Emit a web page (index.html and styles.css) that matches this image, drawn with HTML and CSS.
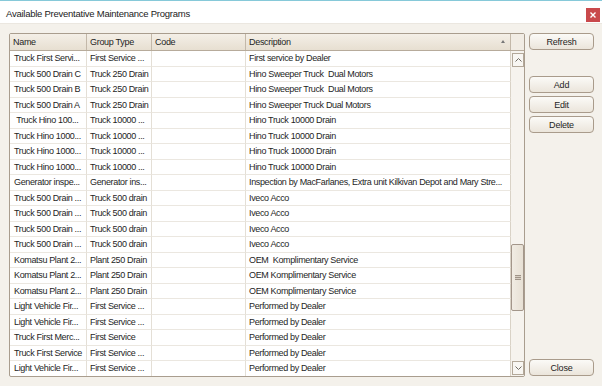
FILE: index.html
```html
<!DOCTYPE html>
<html lang="en">
<head>
    <meta charset="UTF-8">
    <title>Available Preventative Maintenance Programs</title>
    <link rel="stylesheet" href="styles.css">
</head>
<body>
<div class="window">
    <div class="titlebar">
        <span class="title">Available Preventative Maintenance Programs</span>
        <span class="close-x">
            <svg width="6" height="6" viewBox="0 0 6 6"><path d="M0.5 0.5L5.5 5.5M5.5 0.5L0.5 5.5" stroke="#fff" stroke-width="1.4"/></svg>
        </span>
    </div>
    <div class="content">
        <div class="grid">
            <div class="head">
                <div class="hcell">Name</div>
                <div class="hcell">Group Type</div>
                <div class="hcell">Code</div>
                <div class="hcell sorted">Description<span class="sort"></span></div>
                <div class="hcell corner"></div>
            </div>
            <div class="body">
                <div class="rows">
                    <div class="cell">Truck First Servi...</div><div class="cell">First Service ...</div><div class="cell"></div><div class="cell">First service by Dealer</div>
                    <div class="cell">Truck 500 Drain C</div><div class="cell">Truck 250 Drain</div><div class="cell"></div><div class="cell">Hino Sweeper Truck&nbsp; Dual Motors</div>
                    <div class="cell">Truck 500 Drain B</div><div class="cell">Truck 250 Drain</div><div class="cell"></div><div class="cell">Hino Sweeper Truck&nbsp; Dual Motors</div>
                    <div class="cell">Truck 500 Drain A</div><div class="cell">Truck 250 Drain</div><div class="cell"></div><div class="cell">Hino Sweeper Truck Dual Motors</div>
                    <div class="cell">&nbsp;Truck Hino 100...</div><div class="cell">Truck 10000 ...</div><div class="cell"></div><div class="cell">Hino Truck 10000 Drain</div>
                    <div class="cell">Truck Hino 1000...</div><div class="cell">Truck 10000 ...</div><div class="cell"></div><div class="cell">Hino Truck 10000 Drain</div>
                    <div class="cell">Truck Hino 1000...</div><div class="cell">Truck 10000 ...</div><div class="cell"></div><div class="cell">Hino Truck 10000 Drain</div>
                    <div class="cell">Truck Hino 1000...</div><div class="cell">Truck 10000 ...</div><div class="cell"></div><div class="cell">Hino Truck 10000 Drain</div>
                    <div class="cell">Generator inspe...</div><div class="cell">Generator ins...</div><div class="cell"></div><div class="cell">Inspection by MacFarlanes, Extra unit Kilkivan Depot and Mary Stre...</div>
                    <div class="cell">Truck 500 Drain ...</div><div class="cell">Truck 500 drain</div><div class="cell"></div><div class="cell">Iveco Acco</div>
                    <div class="cell">Truck 500 Drain ...</div><div class="cell">Truck 500 drain</div><div class="cell"></div><div class="cell">Iveco Acco</div>
                    <div class="cell">Truck 500 Drain ...</div><div class="cell">Truck 500 drain</div><div class="cell"></div><div class="cell">Iveco Acco</div>
                    <div class="cell">Truck 500 Drain ...</div><div class="cell">Truck 500 drain</div><div class="cell"></div><div class="cell">Iveco Acco</div>
                    <div class="cell">Komatsu Plant 2...</div><div class="cell">Plant 250 Drain</div><div class="cell"></div><div class="cell">OEM&nbsp; Komplimentary Service</div>
                    <div class="cell">Komatsu Plant 2...</div><div class="cell">Plant 250 Drain</div><div class="cell"></div><div class="cell">OEM Komplimentary Service</div>
                    <div class="cell">Komatsu Plant 2...</div><div class="cell">Plant 250 Drain</div><div class="cell"></div><div class="cell">OEM Komplimentary Service</div>
                    <div class="cell">Light Vehicle Fir...</div><div class="cell">First Service ...</div><div class="cell"></div><div class="cell">Performed by Dealer</div>
                    <div class="cell">Light Vehicle Fir...</div><div class="cell">First Service ...</div><div class="cell"></div><div class="cell">Performed by Dealer</div>
                    <div class="cell">Truck First Merc...</div><div class="cell">First Service</div><div class="cell"></div><div class="cell">Performed by Dealer</div>
                    <div class="cell">Truck First Service</div><div class="cell">First Service ...</div><div class="cell"></div><div class="cell">Performed by Dealer</div>
                    <div class="cell">Light Vehicle Fir...</div><div class="cell">First Service ...</div><div class="cell"></div><div class="cell">Performed by Dealer</div>
                </div>
                <div class="scrollbar">
                    <div class="arrow">
                        <svg width="7" height="4" viewBox="0 0 7 4"><polyline points="0.5,3.5 3.5,0.5 6.5,3.5" fill="none" stroke="#6f6a63" stroke-width="1"/></svg>
                    </div>
                    <div class="track">
                        <div class="thumb"><span class="grip"></span></div>
                    </div>
                    <div class="arrow">
                        <svg width="7" height="4" viewBox="0 0 7 4"><polyline points="0.5,0.5 3.5,3.5 6.5,0.5" fill="none" stroke="#6f6a63" stroke-width="1"/></svg>
                    </div>
                </div>
            </div>
        </div>
        <div class="side">
            <button class="btn">Refresh</button>
            <div class="group">
                <button class="btn">Add</button>
                <button class="btn">Edit</button>
                <button class="btn">Delete</button>
            </div>
            <button class="btn close">Close</button>
        </div>
    </div>
</div>
</body>
</html>
```

FILE: styles.css
```css
* {
    margin: 0;
    padding: 0;
    box-sizing: border-box;
}

body {
    width: 602px;
    height: 386px;
    overflow: hidden;
    font-family: "Liberation Sans", Arial, sans-serif;
    color: #1e1e1e;
    background-color: #f4f1eb;
}

.window {
    width: 602px;
    height: 386px;
    display: flex;
    flex-direction: column;
    border-top: 1px solid #86c9d9;
}

.titlebar {
    height: 23px;
    background-color: #fff;
    display: flex;
    align-items: center;
    justify-content: space-between;
    padding: 0 2px 0 6px;
    border-bottom: 1px solid #ebe7e0;
}

.title {
    font-size: 9.5px;
    letter-spacing: -0.25px;
    color: #222;
    padding-top: 2px;
}

.close-x {
    width: 14px;
    height: 14px;
    margin-top: 5px;
    background-color: #c9494c;
    display: flex;
    align-items: center;
    justify-content: center;
}

.content {
    flex: 1;
    display: flex;
    padding: 9px 0 0 9px;
}

/* 表格 */
.grid {
    width: 516px;
    height: 344px;
    border: 1px solid #a99d8e;
    border-radius: 2px;
    background-color: #fff;
    display: flex;
    flex-direction: column;
    overflow: hidden;
}

.head {
    display: grid;
    grid-template-columns: 77px 65px 94px 265px 13px;
    height: 17px;
    flex-shrink: 0;
    background: linear-gradient(#f4efe7, #e7dfd1);
    border-bottom: 1px solid #b7ab9b;
}

.hcell {
    font-size: 9px;
    letter-spacing: -0.3px;
    line-height: 16px;
    padding-left: 3px;
    border-right: 1px solid #c3b8a9;
    position: relative;
}

.hcell.corner {
    border-right: none;
    background: #f1ece4;
}

.sort {
    position: absolute;
    right: 5px;
    top: 6px;
    width: 0;
    height: 0;
    border-left: 2.5px solid transparent;
    border-right: 2.5px solid transparent;
    border-bottom: 3px solid #777;
}

.body {
    flex: 1;
    display: flex;
    overflow: hidden;
}

.rows {
    width: 501px;
    display: grid;
    grid-template-columns: 77px 65px 94px 265px;
    grid-auto-rows: 15.5px;
    align-content: start;
}

.cell {
    font-size: 9px;
    letter-spacing: -0.35px;
    line-height: 15px;
    padding-left: 3px;
    white-space: nowrap;
    overflow: hidden;
    border-right: 1px solid #e4dfd6;
    border-bottom: 1px solid #ebe7e0;
}

.cell:nth-child(4n+1) {
    padding-left: 4px;
}

.cell:nth-child(4n) {
    border-right: 1px solid #d9d2c6;
}

.scrollbar {
    width: 13px;
    display: flex;
    flex-direction: column;
    background-color: #f6f3ee;
}

.arrow {
    height: 14px;
    border: 1px solid #b3a899;
    margin: 2px 0 1px 1px;
    background-color: #f8f6f2;
    display: flex;
    align-items: center;
    justify-content: center;
}

.track {
    flex: 1;
    padding-top: 176px;
}

.thumb {
    height: 67px;
    border: 1px solid #a3968a;
    border-radius: 2px;
    background: linear-gradient(90deg, #f1ece3, #e7e0d4);
    display: flex;
    align-items: center;
    justify-content: center;
}

.grip {
    width: 6px;
    height: 5px;
    background: repeating-linear-gradient(#9f9488 0, #9f9488 1px, #d8cfc3 1px, #d8cfc3 2px);
}

/* 按钮 */
.side {
    width: 65px;
    margin-left: 4px;
    display: flex;
    flex-direction: column;
}

.btn {
    height: 17px;
    width: 65px;
    font-family: "Liberation Sans", Arial, sans-serif;
    font-size: 9px;
    letter-spacing: -0.2px;
    color: #1e1e1e;
    border: 1px solid #a99b8b;
    border-radius: 4px;
    background: linear-gradient(#fbfaf7, #ebe5db);
}

.group {
    display: flex;
    flex-direction: column;
    gap: 3px;
    margin-top: 26px;
}

.close {
    margin-top: auto;
    margin-bottom: 10px;
}
```
